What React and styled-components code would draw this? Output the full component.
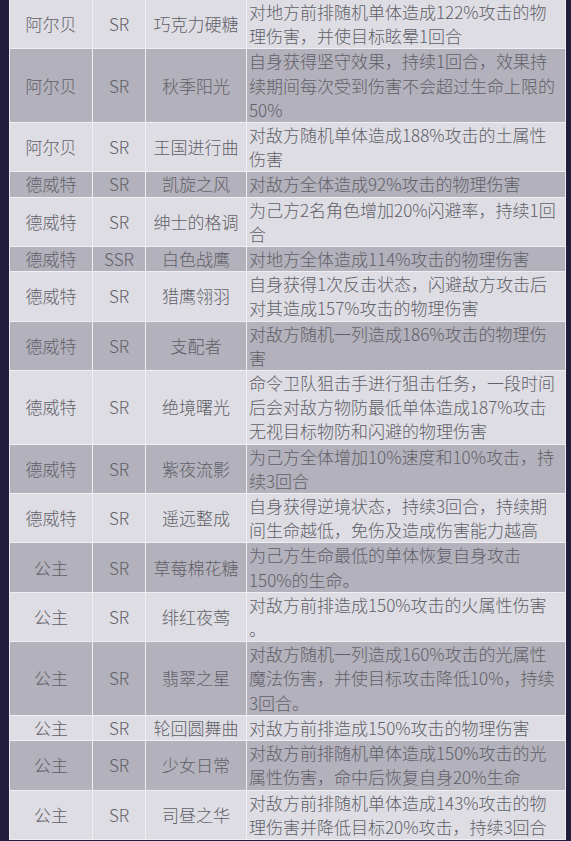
import React from "react";
import styled, { createGlobalStyle } from "styled-components";

const GlobalStyle = createGlobalStyle`
  html, body {
    margin: 0;
    padding: 0;
    background: #221d3d;
  }
`;

const Page = styled.div`
  padding: 0 5px 0 9px;
  min-height: 841px;
  background: #221d3d;
`;

const Table = styled.table`
  width: 557px;
  table-layout: fixed;
  border-collapse: collapse;
  border-left: 1px solid #d6d5dc;
  border-right: 1px solid #d6d5dc;
  font-family: "Noto Sans CJK SC", "Noto Sans", sans-serif;
  font-size: 17px;
  font-weight: 300;
  line-height: 24.2px;
  color: #606068;
`;

const Row = styled.tr`
  background: ${(p) => (p.$dark ? "#b3b1bb" : "#dedde3")};
`;

const Cell = styled.td`
  border: 1px solid #efeff3;
  border-top: ${(p) => (p.$first ? "none" : "1px solid #efeff3")};
  padding: 0;
  text-align: center;
  vertical-align: middle;
  white-space: nowrap;
`;

const Desc = styled(Cell)`
  text-align: left;
  padding: 0 0 0 2px;
  white-space: pre-line;
`;

const rows = [
  ["阿尔贝", "SR", "巧克力硬糖", "对地方前排随机单体造成122%攻击的物\n理伤害，并使目标眩晕1回合"],
  ["阿尔贝", "SR", "秋季阳光", "自身获得坚守效果，持续1回合，效果持\n续期间每次受到伤害不会超过生命上限的\n50%"],
  ["阿尔贝", "SR", "王国进行曲", "对敌方随机单体造成188%攻击的土属性\n伤害"],
  ["德威特", "SR", "凯旋之风", "对敌方全体造成92%攻击的物理伤害"],
  ["德威特", "SR", "绅士的格调", "为己方2名角色增加20%闪避率，持续1回\n合"],
  ["德威特", "SSR", "白色战鹰", "对地方全体造成114%攻击的物理伤害"],
  ["德威特", "SR", "猎鹰翎羽", "自身获得1次反击状态，闪避敌方攻击后\n对其造成157%攻击的物理伤害"],
  ["德威特", "SR", "支配者", "对敌方随机一列造成186%攻击的物理伤\n害"],
  ["德威特", "SR", "绝境曙光", "命令卫队狙击手进行狙击任务，一段时间\n后会对敌方物防最低单体造成187%攻击\n无视目标物防和闪避的物理伤害"],
  ["德威特", "SR", "紫夜流影", "为己方全体增加10%速度和10%攻击，持\n续3回合"],
  ["德威特", "SR", "遥远整成", "自身获得逆境状态，持续3回合，持续期\n间生命越低，免伤及造成伤害能力越高"],
  ["公主", "SR", "草莓棉花糖", "为己方生命最低的单体恢复自身攻击\n150%的生命。"],
  ["公主", "SR", "绯红夜莺", "对敌方前排造成150%攻击的火属性伤害\n。"],
  ["公主", "SR", "翡翠之星", "对敌方随机一列造成160%攻击的光属性\n魔法伤害，并使目标攻击降低10%，持续\n3回合。"],
  ["公主", "SR", "轮回圆舞曲", "对敌方前排造成150%攻击的物理伤害"],
  ["公主", "SR", "少女日常", "对敌方前排随机单体造成150%攻击的光\n属性伤害，命中后恢复自身20%生命"],
  ["公主", "SR", "司昼之华", "对敌方前排随机单体造成143%攻击的物\n理伤害并降低目标20%攻击，持续3回合"],
];

export default function App() {
  return (
    <>
      <GlobalStyle />
      <Page>
        <Table>
          <colgroup>
            <col style={{ width: 83 }} />
            <col style={{ width: 53 }} />
            <col style={{ width: 101 }} />
            <col />
          </colgroup>
          <tbody>
            {rows.map(([name, rarity, skill, desc], i) => (
              <Row key={i} $dark={i % 2 === 1}>
                <Cell $first={i === 0}>{name}</Cell>
                <Cell $first={i === 0}>{rarity}</Cell>
                <Cell $first={i === 0}>{skill}</Cell>
                <Desc $first={i === 0}>{desc}</Desc>
              </Row>
            ))}
          </tbody>
        </Table>
      </Page>
    </>
  );
}
